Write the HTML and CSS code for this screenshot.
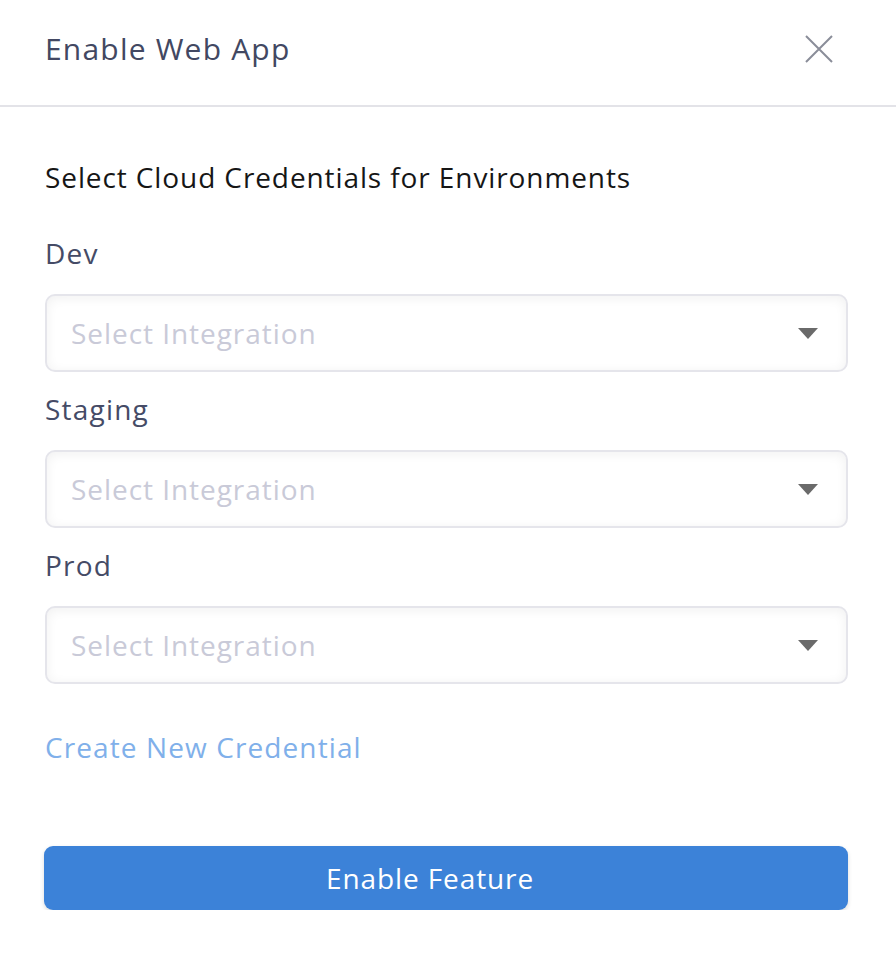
FILE: index.html
```html
<!DOCTYPE html>
<html lang="en">
<head>
<meta charset="utf-8">
<title>Enable Web App</title>
<link rel="stylesheet" href="styles.css">
</head>
<body>
<div class="modal">
  <header class="modal-header">
    <h1 class="modal-title">Enable Web App</h1>
    <button class="close-btn" aria-label="Close">
      <svg width="28" height="28" viewBox="0 0 28 28"><path d="M1 1 L27 27 M27 1 L1 27" stroke="#8a8d99" stroke-width="2" fill="none"/></svg>
    </button>
  </header>
  <main class="modal-body">
    <p class="section-title">Select Cloud Credentials for Environments</p>
    <div class="field">
      <label class="field-label">Dev</label>
      <div class="select"><span class="placeholder">Select Integration</span><span class="caret"></span></div>
    </div>
    <div class="field">
      <label class="field-label">Staging</label>
      <div class="select"><span class="placeholder">Select Integration</span><span class="caret"></span></div>
    </div>
    <div class="field">
      <label class="field-label">Prod</label>
      <div class="select"><span class="placeholder">Select Integration</span><span class="caret"></span></div>
    </div>
    <a class="create-link">Create New Credential</a>
    <button class="primary-btn">Enable Feature</button>
  </main>
</div>
</body>
</html>
```
FILE: styles.css
```css
html, body { margin: 0; padding: 0; background: #fff; }
body { font-family: "Open Sans", "DejaVu Sans", sans-serif; }
.modal { width: 896px; }
.modal-header {
  height: 107px;
  box-sizing: border-box;
  border-bottom: 2px solid #e3e3e8;
  display: flex;
  align-items: center;
  justify-content: space-between;
  padding: 0 63px 8px 45px;
}
.modal-title { margin: 0; font-size: 30px; font-weight: 500; color: #424862; letter-spacing: 1.2px; line-height: 40px; }
.close-btn { background: none; border: 0; padding: 0; width: 28px; height: 28px; display: block; }
.close-btn svg { display: block; }
.modal-body { padding: 50px 48px 0 45px; display: flex; flex-direction: column; }
.section-title { margin: 0 0 19px; font-size: 28px; color: #161616; line-height: 40px; letter-spacing: 0.9px; }
.field { display: flex; flex-direction: column; }
.field-label { font-size: 28px; color: #454b66; line-height: 40px; margin: 17px 0 21px; letter-spacing: 1.2px; }
.select {
  height: 78px;
  box-sizing: border-box;
  border: 2px solid #e5e5eb;
  border-radius: 10px;
  box-shadow: inset 0 2px 12px rgba(0,0,0,0.06);
  display: flex;
  align-items: center;
  justify-content: space-between;
  padding: 0 28px 0 24px;
}
.placeholder { font-size: 28px; color: #c9cad8; letter-spacing: 0.95px; }
.caret { width: 0; height: 0; border-left: 10px solid transparent; border-right: 10px solid transparent; border-top: 11px solid #6a6a6a; }
.create-link { margin-top: 43px; font-size: 28px; color: #80b0ea; line-height: 40px; letter-spacing: 1.1px; }
.primary-btn {
  margin-top: 79px;
  height: 64px;
  width: 804px;
  margin-left: -1px;
  padding: 0 32px 0 0;
  border: 0;
  border-radius: 9px;
  background: #3c82d8;
  color: #fff;
  font-family: inherit;
  font-size: 28px;
  letter-spacing: 0.9px;
  box-shadow: 0 2px 4px rgba(0,0,0,0.15);
}
```
